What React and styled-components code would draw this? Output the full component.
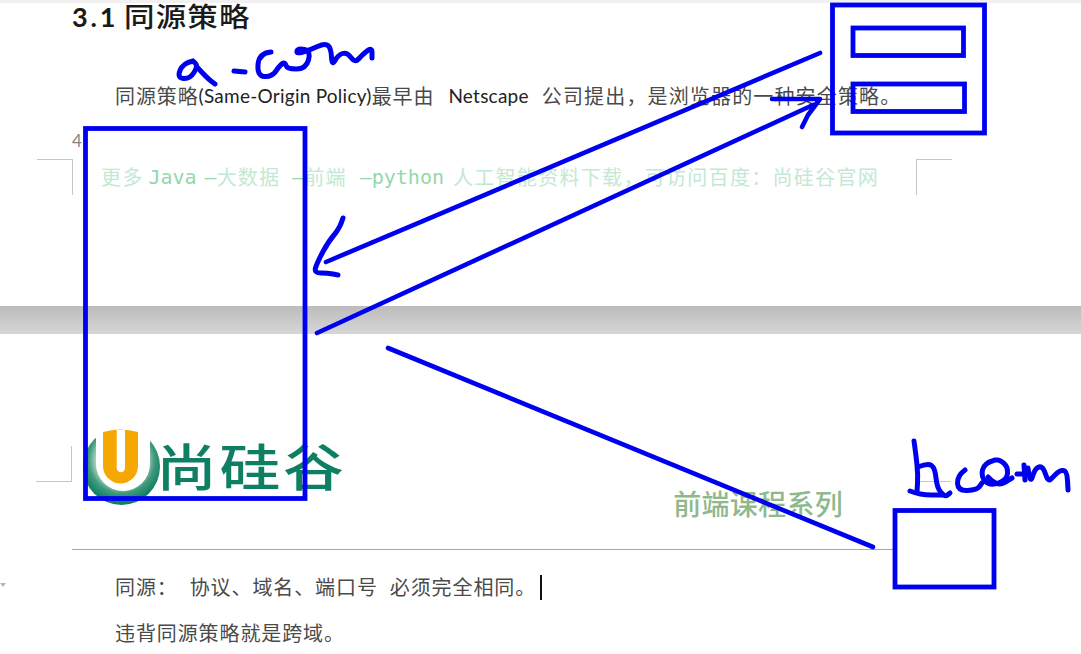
import React from 'react';
import styled, { createGlobalStyle } from 'styled-components';

const CJK = '"Noto Sans CJK SC", sans-serif';
const LATIN = 'Lato, "Noto Sans CJK SC", sans-serif';
const MONO = '"DejaVu Sans Mono", monospace';
const INK = '#0000f0';

const GlobalStyle = createGlobalStyle`
  html, body {
    margin: 0;
    padding: 0;
    background: #fff;
    overflow: hidden;
  }
`;

const Viewer = styled.div`
  position: relative;
  width: 1081px;
  height: 654px;
  overflow: hidden;
  background: #fff;
  display: flex;
  flex-direction: column;
`;
const TopStrip = styled.div`
  height: 3px;
  flex: none;
  background: #f1f1f1;
`;
const PageTop = styled.section`
  height: 303px;
  flex: none;
  display: flex;
  flex-direction: column;
`;
const PageGap = styled.div`
  height: 28px;
  flex: none;
  background: linear-gradient(#bcbcbc, #d6d6d6);
`;
const PageBottom = styled.section`
  flex: 1;
  display: flex;
  flex-direction: column;
  position: relative;
`;
const Heading = styled.h1`
  margin: -3px 0 0;
  padding-left: 72px;
  height: 33px;
  font: 700 27px/33px ${LATIN};
  letter-spacing: 2.9px;
  color: #1a1a1a;
  white-space: nowrap;
  span {
    display: inline-block;
    font-weight: 500;
    letter-spacing: 1px;
    margin-left: -4px;
    transform: scaleX(1.13);
    transform-origin: left center;
  }
`;
const BodyLine = styled.p`
  margin: ${({ $top }) => $top}px 0 0;
  padding-left: 115px;
  height: 30px;
  font: 400 20px/30px ${CJK};
  letter-spacing: 0.9px;
  color: #4a4a4a;
  white-space: nowrap;
  display: flex;
  align-items: center;
`;
const Latin = styled.span`
  font-family: Lato, sans-serif;
  font-size: 19px;
  letter-spacing: 0.25px;
  color: #222;
  margin: 0 ${({ $right }) => $right || 0}px 0 ${({ $left }) => $left || 0}px;
`;
const Spaced = styled.span`
  margin-left: ${({ $left }) => $left || 0}px;
  ${({ $track }) => $track && `letter-spacing: ${$track}px;`}
`;
const PageNumber = styled.div`
  margin-top: 21px;
  padding-left: 72px;
  height: 18px;
  font: 400 17px/18px ${LATIN};
  color: #858585;
`;
const HeaderRow = styled.div`
  display: flex;
  align-items: flex-start;
  padding-left: 37px;
  margin-top: 9px;
`;
const CornerMark = styled.div`
  flex: none;
  box-sizing: border-box;
  width: 36px;
  height: 36px;
  ${({ $v }) => `border-${$v}: 1px solid #c6c6c6;`}
  ${({ $h }) => `border-${$h}: 1px solid #c6c6c6;`}
`;
const Watermark = styled.div`
  width: 843px;
  padding-left: 28px;
  box-sizing: border-box;
  margin-top: 3px;
  height: 30px;
  display: flex;
  align-items: center;
  font: 400 20px/30px ${CJK};
  letter-spacing: 1.2px;
  color: #c3e8d3;
  white-space: nowrap;
`;
const Code = styled.span`
  font-family: ${MONO};
  font-size: 20px;
  letter-spacing: 0;
  color: #93d8ad;
  margin-left: ${({ $left }) => $left || 0}px;
`;
const BrandRow = styled.div`
  height: 215px;
  box-sizing: border-box;
  padding: 93px 130px 0 36px;
  display: flex;
  align-items: flex-start;
`;
const BottomCorner = styled(CornerMark)`
  margin-top: 19px;
`;
const LogoMark = styled.svg`
  flex: none;
  width: 80px;
  height: 80px;
  margin-left: 10px;
`;
const LogoText = styled.div`
  margin: 8px 0 0 -6px;
  font: 500 61px/72px ${CJK};
  letter-spacing: 2.5px;
  color: #0f7f64;
  white-space: nowrap;
  transform: scaleY(0.82);
  transform-origin: top left;
`;
const CourseTitle = styled.div`
  margin: 59px 72px 0 auto;
  font: 500 28px/34px ${CJK};
  letter-spacing: 0.3px;
  color: #8fb98c;
  white-space: nowrap;
`;
const Rule = styled.div`
  height: 1px;
  margin: 0 186px 0 72px;
  background: #a8a8a8;
  flex: none;
`;
const Caret = styled.span`
  display: inline-block;
  width: 2px;
  height: 25px;
  margin-left: 4px;
  background: #111;
`;
const MarginTick = styled.div`
  position: absolute;
  left: 0;
  top: 249px;
  width: 0;
  height: 0;
  border-top: 4px solid #b5b5b5;
  border-left: 3px solid transparent;
  border-right: 3px solid transparent;
`;
const InkLayer = styled.svg`
  position: absolute;
  left: 0;
  top: 0;
  width: 1081px;
  height: 654px;
  pointer-events: none;
`;

const boxes = [
  { x: 85.5, y: 128.5, w: 219.5, h: 370 },
  { x: 832.5, y: 5, w: 152, h: 128 },
  { x: 853, y: 28, w: 110.5, h: 27.5 },
  { x: 853, y: 84, w: 111.5, h: 27.5 },
  { x: 895, y: 510.5, w: 99, h: 76.5 },
];

// handwriting, as lists of points that get rounded off below
const handwriting = [
  // a-com
  [193, 61, 183, 63, 177, 78, 190, 79, 198, 66, 193, 61],
  [197, 67, 207, 78, 215, 84],
  [234, 71, 245, 72],
  [271, 52, 259, 53, 257, 76, 272, 77, 280, 65, 285, 62, 287, 69, 306, 69, 311, 51, 298, 48, 296, 54, 310, 50, 325, 43, 331, 48, 332, 66, 338, 55, 347, 52, 355, 63, 362, 55, 372, 47, 372, 58],
  // b.com
  [914, 441, 916, 455, 918, 475, 917, 492],
  [918, 467, 928, 463, 935, 468, 937, 488, 945, 497, 950, 493],
  [910, 491, 920, 495, 943, 495],
  [965, 470, 957, 476, 958, 491, 977, 490, 982, 483],
  [995, 460, 984, 463, 981, 477, 990, 486, 1007, 480, 1008, 467, 1000, 460, 995, 460],
  [988, 477, 997, 487, 1012, 478],
  [1017, 474, 1028, 474],
  [1024, 465, 1025, 480],
  [1028, 468, 1030, 485, 1035, 468, 1043, 466, 1048, 482, 1053, 477, 1060, 470, 1067, 471, 1068, 490],
  // head of the arrow on the left
  [343, 218, 340, 228, 328, 242, 317, 263, 314, 273, 328, 273, 338, 275],
];

const smooth = (pts) => {
  let d = `M${pts[0]} ${pts[1]}`;
  for (let i = 2; i < pts.length - 2; i += 2) {
    const mx = (pts[i] + pts[i + 2]) / 2;
    const my = (pts[i + 1] + pts[i + 3]) / 2;
    d += ` Q${pts[i]} ${pts[i + 1]} ${mx} ${my}`;
  }
  return `${d} L${pts[pts.length - 2]} ${pts[pts.length - 1]}`;
};

const arrows = [
  'M820 53 L326 262',
  'M317 333 L813 105',
  'M772 99 L820 99 L808 115 L802 127',
  'M388 348 L873 547',
];

const App = () => (
  <Viewer>
    <GlobalStyle />
    <TopStrip />
    <PageTop>
      <Heading>
        3.1 <span>同源策略</span>
      </Heading>
      <BodyLine $top={48}>
        同源策略<Latin>(Same-Origin Policy)</Latin>最早由
        <Latin $left={14} $right={13}>Netscape</Latin>
        <Spaced $track={1.15}>公司提出，是浏览器的一种安全策略。</Spaced>
      </BodyLine>
      <PageNumber>4</PageNumber>
      <HeaderRow>
        <CornerMark $v="top" $h="right" />
        <Watermark>
          更多<Code $left={5}>Java</Code>
          <Code $left={8}>–</Code>大数据
          <Code $left={12}>–</Code>前端
          <Code $left={13}>–python</Code>
          <Spaced $left={9} $track={1.3}>人工智能资料下载，可访问百度：尚硅谷官网</Spaced>
        </Watermark>
        <CornerMark $v="top" $h="left" />
      </HeaderRow>
    </PageTop>
    <PageGap />
    <PageBottom>
      <BrandRow>
        <BottomCorner $v="bottom" $h="right" />
        <LogoMark viewBox="0 0 80 80">
          <defs>
            <radialGradient id="logoRing" cx="50%" cy="42%" r="55%">
              <stop offset="55%" stopColor="#cfe3d6" />
              <stop offset="78%" stopColor="#3f9a7c" />
              <stop offset="100%" stopColor="#0f7f64" />
            </radialGradient>
          </defs>
          <circle cx="39.5" cy="39.5" r="38.5" fill="url(#logoRing)" />
          <path d="M14 0 H68 V37 A27 27 0 0 1 14 37 Z" fill="#fff" />
          <path
            fillRule="evenodd"
            fill="#f5a704"
            d="M21 5 Q38 0 56 5 V39 A17.5 17.5 0 0 1 21 39 Z M34.7 3 V41 A4.1 4.1 0 0 0 43 41 V3 Z"
          />
        </LogoMark>
        <LogoText>尚硅谷</LogoText>
        <CourseTitle>前端课程系列</CourseTitle>
        <BottomCorner $v="bottom" $h="left" />
      </BrandRow>
      <Rule />
      <BodyLine $top={22}>
        同源：<Spaced $left={12}>协议、域名、端口号</Spaced>
        <Spaced $left={12}>必须完全相同。</Spaced>
        <Caret />
      </BodyLine>
      <BodyLine $top={16}>违背同源策略就是跨域。</BodyLine>
      <MarginTick />
    </PageBottom>
    <InkLayer viewBox="0 0 1081 654">
      <g fill="none" stroke={INK} strokeLinecap="round" strokeLinejoin="round">
        {boxes.map((b) => (
          <rect
            key={`${b.x}-${b.y}`}
            x={b.x}
            y={b.y}
            width={b.w}
            height={b.h}
            strokeLinejoin="miter"
            strokeWidth="4.8"
          />
        ))}
        {handwriting.map((pts) => (
          <path key={pts.join()} d={smooth(pts)} strokeWidth="5" />
        ))}
        {arrows.map((d) => (
          <path key={d} d={d} strokeWidth="4.6" />
        ))}
      </g>
    </InkLayer>
  </Viewer>
);

export default App;
